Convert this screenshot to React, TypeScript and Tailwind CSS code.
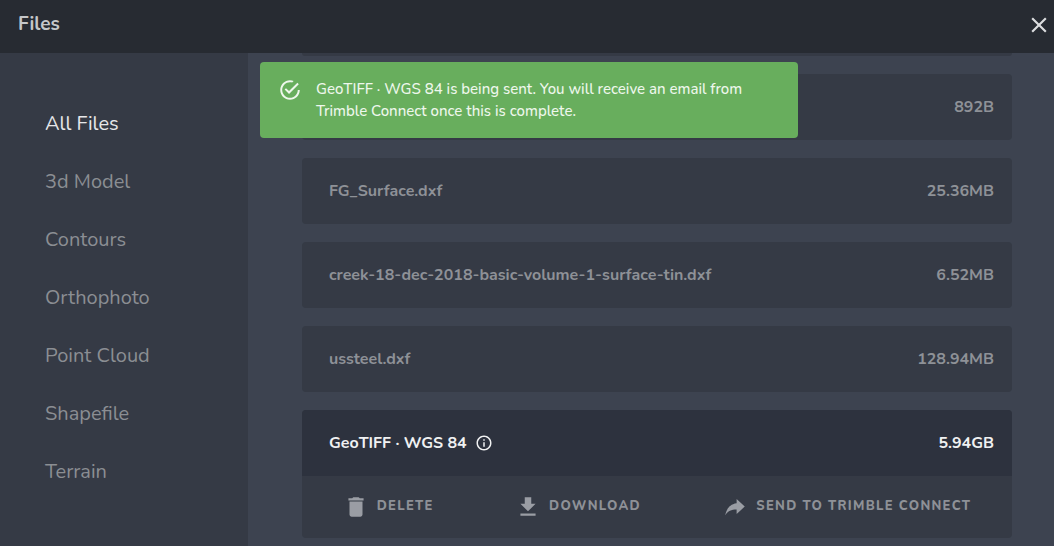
import type { ReactNode } from "react";
import { IoMdCheckmarkCircleOutline, IoMdShareAlt } from "react-icons/io";
import { MdDelete, MdFileDownload, MdInfoOutline, MdClose } from "react-icons/md";

const categories = ["All Files", "3d Model", "Contours", "Orthophoto", "Point Cloud", "Shapefile", "Terrain"];

const files = [
  { name: "", size: "892B" },
  { name: "FG_Surface.dxf", size: "25.36MB" },
  { name: "creek-18-dec-2018-basic-volume-1-surface-tin.dxf", size: "6.52MB" },
  { name: "ussteel.dxf", size: "128.94MB" },
];

function Action({ icon, label }: { icon: ReactNode; label: string }) {
  return (
    <button type="button" className="flex items-center gap-2 text-[13px] font-extrabold tracking-widest text-[#8e9197]">
      {icon}
      {label}
    </button>
  );
}

export default function App() {
  return (
    <div className="flex min-h-screen flex-col bg-[#3d4350] font-['Nunito','Open_Sans',sans-serif]">
      <header className="flex h-[53px] items-center justify-between bg-[#272b32] pr-0.5 pb-1 pl-[18px]">
        <h1 className="text-[19px] font-bold text-[#c5c7c9]">Files</h1>
        <button type="button" aria-label="Close" className="text-[#dcdddf]">
          <MdClose className="size-[26px]" />
        </button>
      </header>
      <div className="flex flex-1">
        <nav className="w-[248px] shrink-0 bg-[#353a45] pt-[57px] pl-[45px]">
          <ul className="flex flex-col gap-[30px]">
            {categories.map((c, i) => (
              <li key={c}>
                <a href="#" className={i === 0 ? "block text-xl leading-7 text-[#e6e7e9]" : "block text-xl leading-7 text-[#8b8e93]"}>
                  {c}
                </a>
              </li>
            ))}
          </ul>
        </nav>
        <main className="relative min-w-0 flex-1 pr-[42px] pb-2 pl-[54px]">
          <div role="status" className="absolute top-[9px] left-3 flex w-[538px] gap-[14px] rounded bg-[#68ae5d] px-[18px] py-4 text-[#eef7ec]">
            <IoMdCheckmarkCircleOutline className="size-6 shrink-0" />
            <p className="pr-5 text-[15px] leading-[22px] font-medium">
              GeoTIFF · WGS 84 is being sent. You will receive an email from Trimble Connect once this is complete.
            </p>
          </div>
          <div className="mb-[18px] h-[3px] rounded-b bg-[#353a45]" />
          <ul className="flex flex-col gap-[18px] text-base font-bold">
            {files.map((f) => (
              <li key={f.size} className="flex h-[66px] items-center justify-between rounded bg-[#353a45] pr-[18px] pl-[27px] text-[#8e9197]">
                <span>{f.name}</span>
                <span>{f.size}</span>
              </li>
            ))}
            <li className="overflow-hidden rounded bg-[#353a45]">
              <div className="flex h-[66px] items-center justify-between bg-[#2d323e] pr-[18px] pl-[27px] text-[#f0f1f2]">
                <span className="flex items-center gap-2">
                  GeoTIFF · WGS 84
                  <MdInfoOutline className="size-[18px]" />
                </span>
                <span>5.94GB</span>
              </div>
              <div className="flex h-[62px] items-center justify-around">
                <Action icon={<MdDelete className="size-[26px] text-[#9a9da4]" />} label="DELETE" />
                <Action icon={<MdFileDownload className="size-[26px] text-[#9a9da4]" />} label="DOWNLOAD" />
                <Action icon={<IoMdShareAlt className="size-[26px] text-[#9a9da4]" />} label="SEND TO TRIMBLE CONNECT" />
              </div>
            </li>
          </ul>
        </main>
      </div>
    </div>
  );
}
